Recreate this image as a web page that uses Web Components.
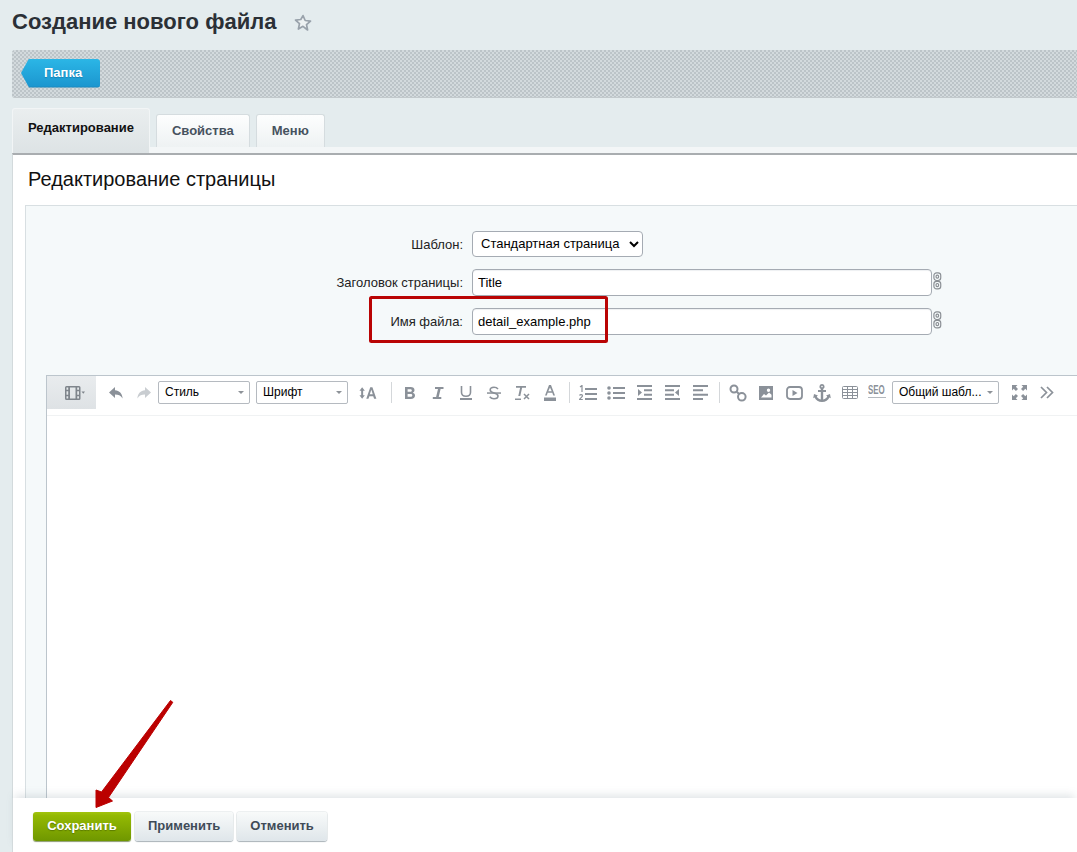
<!DOCTYPE html>
<html lang="ru">
<head>
<meta charset="utf-8">
<title>Создание нового файла</title>
<style>
  html, body { margin: 0; height: 100%; }
  body {
    width: 1077px; height: 852px; overflow: hidden; position: relative;
    background: #e4ecee; color: #000;
    font-family: "Liberation Sans", Arial, sans-serif; font-size: 13px;
    display: flex; flex-direction: column;
  }
</style>
</head>
<body>
<page-title>Создание нового файла</page-title>
<action-bar><back-button>Папка</back-button></action-bar>
<tab-strip>
  <tab-item active>Редактирование</tab-item>
  <tab-item>Свойства</tab-item>
  <tab-item>Меню</tab-item>
</tab-strip>
<content-panel heading="Редактирование страницы">
  <form-panel></form-panel>
  <html-editor></html-editor>
</content-panel>
<footer-bar>
  <foot-button kind="save">Сохранить</foot-button>
  <foot-button>Применить</foot-button>
  <foot-button>Отменить</foot-button>
</footer-bar>
<red-marks></red-marks>

<script>
function shadow(el, html) {
  el.attachShadow({ mode: "open" }).innerHTML = html;
}

class PageTitle extends HTMLElement {
  connectedCallback() {
    shadow(this, `
      <style>
        :host { display: flex; align-items: center; height: 50px; padding: 0 0 6px 12px; box-sizing: border-box; }
        h1 { margin: 0; font: bold 22px "Liberation Sans", Arial, sans-serif; color: #2b3036; }
        svg { margin-left: 18px; margin-top: 2px; }
      </style>
      <h1><slot></slot></h1>
      <svg width="18" height="18" viewBox="0 0 18 18"><path d="M9 1.6l2.2 4.9 5.3.6-4 3.6 1.1 5.3L9 12.3 4.4 15l1.1-5.3-4-3.6 5.3-.6z" fill="#eef2f3" stroke="#99a2ab" stroke-width="1.7" stroke-linejoin="round"/></svg>`);
  }
}

class ActionBar extends HTMLElement {
  connectedCallback() {
    shadow(this, `
      <style>
        :host {
          display: flex; align-items: center; box-sizing: border-box;
          height: 48px; margin-left: 12px; padding: 0 0 1px 9px;
          border-radius: 3px 0 0 3px;
          border-bottom: 1px solid #c2c9cc;
          background-color: #d3dadd;
          background-image: radial-gradient(circle at 1px 1px, #bcc4c8 0.9px, transparent 1.1px),
                            radial-gradient(circle at 3px 3px, #bcc4c8 0.9px, transparent 1.1px);
          background-size: 4px 4px;
        }
      </style>
      <slot></slot>`);
  }
}

class BackButton extends HTMLElement {
  connectedCallback() {
    shadow(this, `
      <style>
        :host {
          display: flex; align-items: center; box-sizing: border-box;
          width: 79px; height: 29px; padding: 0 0 2px 23px;
          color: #fff; font: bold 13px "Liberation Sans", Arial, sans-serif;
          text-shadow: 0 1px 1px #1480b4;
          background: linear-gradient(#2bb6e6, #1c97d0 93%, #1a80b2);
          clip-path: polygon(8px 0, 100% 0, 100% 100%, 8px 100%, 0 50%);
          border-radius: 0 3px 3px 0;
        }
      </style>
      <slot></slot>`);
  }
}

class TabStrip extends HTMLElement {
  connectedCallback() {
    shadow(this, `
      <style>
        :host {
          display: flex; align-items: flex-end; gap: 6px;
          height: 45px; margin: 10px 0 0 12px;
          position: relative;
        }
        .band { position: absolute; left: 138px; right: 0; bottom: 0; height: 6px; background: #f3f6f7; }
      </style>
      <div class="band"></div>
      <slot></slot>`);
  }
}

class TabItem extends HTMLElement {
  connectedCallback() {
    shadow(this, `
      <style>
        :host {
          display: flex; align-items: center; justify-content: center; box-sizing: border-box;
          position: relative;
          height: 33px; margin-bottom: 6px; padding: 0 15px 2px;
          font: bold 13px "Liberation Sans", Arial, sans-serif; color: #46525e;
          background: linear-gradient(#fdfefe, #eef2f3);
          border: 1px solid #d5dcdf; border-bottom: 0;
          border-radius: 3px 3px 0 0;
        }
        :host([active]) {
          height: 45px; margin-bottom: 0; padding: 0 15px 8px; color: #111;
          background: linear-gradient(#eaeeef, #dde3e5);
          border-color: #f2f5f6; border-bottom: 0;
        }
      </style>
      <slot></slot>`);
  }
}

class ContentPanel extends HTMLElement {
  connectedCallback() {
    shadow(this, `
      <style>
        :host {
          display: flex; flex-direction: column; flex: 1; min-height: 0; overflow: hidden;
          margin-left: 12px; background: #fff;
          border-top: 2px solid #a9adb0;
          border-left: 1px solid #d3dadc;
        }
        h2 { margin: 0; height: 50px; padding: 11px 0 0 15px; box-sizing: border-box;
             font: normal 20px/26px "Liberation Sans", Arial, sans-serif; color: #111; }
        .inner {
          flex: 1; display: flex; flex-direction: column; margin-left: 12px;
          background: #f5f9fa; border: 1px solid #d8dfe2; border-right: 0; border-bottom: 0;
        }
      </style>
      <h2>${this.getAttribute("heading")}</h2>
      <div class="inner"><slot></slot></div>`);
  }
}

const chain = `<svg width="9" height="18" viewBox="0 0 10 20" fill="none" stroke="#8a8f94" stroke-width="1.3"><rect x="1" y="1" width="7.6" height="8.4" rx="3"/><rect x="3.4" y="3.4" width="2.8" height="3.4" rx="1.2"/><rect x="1" y="10.4" width="7.6" height="8.4" rx="3"/><rect x="3.4" y="12.8" width="2.8" height="3.4" rx="1.2"/></svg>`;

class FormPanel extends HTMLElement {
  connectedCallback() {
    shadow(this, `
      <style>
        :host { display: grid; grid-template-columns: 437px 460px 1fr; column-gap: 9px; padding-top: 25px; align-items: center; height: 169px; box-sizing: border-box; align-content: start; font: 13px "Liberation Sans", Arial, sans-serif; }
        label { text-align: right; color: #222; }
        select, input {
          font: 13px "Liberation Sans", Arial, sans-serif; color: #000; box-sizing: border-box;
          background: #fff; border: 1px solid #a5abb3; border-radius: 4px; margin: 0; outline: 0;
        }
        select { width: 171px; height: 26px; padding: 0 0 1px 4px; }
        input { width: 460px; height: 27px; padding: 0 5px; box-shadow: inset 0 1px 1px #eef0f2; }
        .row { margin-bottom: 12px; }
        .link { display: flex; margin-left: -8px; margin-top: -3px; }
      </style>
      <label class="row">Шаблон:</label>
      <div class="row"><select><option>Стандартная страница</option></select></div>
      <div class="row"></div>
      <label class="row">Заголовок страницы:</label>
      <div class="row"><input value="Title"></div>
      <div class="row link">${chain}</div>
      <label class="row">Имя файла:</label>
      <div class="row"><input value="detail_example.php"></div>
      <div class="row link">${chain}</div>`);
  }
}

const G = "#8b9199";
const icons = {
  undo: `<svg width="16" height="14" viewBox="0 0 16 14"><path d="M7 1L1 6.5 7 12V8.4c3.4 0 5.600.9 7.600 4C14.200 7.400 11.400 4.600 7 4.300z" fill="${G}"/></svg>`,
  redo: `<svg width="16" height="14" viewBox="0 0 16 14"><path d="M9 1l6 5.500L9 12V8.400c-3.400 0-5.600.9-7.600 4C1.800 7.400 4.600 4.600 9 4.300z" fill="#c9cdd1"/></svg>`,
  size: `<svg width="18" height="14" viewBox="0 0 20 15"><path d="M3.500 1L6.500 5H4.600v5h1.900l-3 4-3-4h1.900V5H.5z" fill="${G}"/><path d="M12.500 1h2.400l4.400 13h-2.500l-1-3h-4.300l-1 3H8.100zm1.200 2.800L12 8.900h3.300z" fill="${G}"/></svg>`,
  bold: `<svg width="12" height="14" viewBox="0 0 12 14"><path fill-rule="evenodd" d="M1 1h5.600c2.500 0 3.900 1.200 3.900 3.100 0 1.300-.7 2.200-1.700 2.600 1.400.4 2.200 1.400 2.200 2.900 0 2.200-1.600 3.400-4.200 3.400H1zm2.600 2.200v2.600h2.600c1 0 1.600-.5 1.600-1.300s-.6-1.300-1.600-1.300zm0 4.700v2.900h2.900c1.100 0 1.800-.5 1.800-1.500s-.7-1.400-1.800-1.400z" fill="${G}"/></svg>`,
  italic: `<svg width="12" height="14" viewBox="0 0 12 14"><path d="M3 1h8.500v2H8.600L6.700 11h2.600v2H.8v-2h3.300l1.900-8H3z" fill="${G}"/></svg>`,
  under: `<svg width="12" height="15" viewBox="0 0 12 15"><path d="M1.500 1v6.200c0 2.600 1.700 4 4.500 4s4.500-1.400 4.500-4V1" fill="none" stroke="${G}" stroke-width="1.600"/><path d="M0 13h12v2H0z" fill="${G}"/></svg>`,
  strike: `<svg width="14" height="14" viewBox="0 0 14 14"><path d="M11 3C10 1.800 8.700 1.300 7 1.300 4.800 1.300 3.200 2.300 3.200 4c0 3.700 7.800 2.300 7.800 6 0 1.700-1.700 2.700-4 2.700-1.800 0-3.200-.6-4.300-1.900" fill="none" stroke="${G}" stroke-width="1.600"/><path d="M0 6.300h14v1.500H0z" fill="${G}"/></svg>`,
  clear: `<svg width="15" height="16" viewBox="0 0 15 16"><path d="M1 1h10v1.800H7.100L5.300 11H3.300l1.800-8.200H1zM0 13.500h6V15H0z" fill="${G}"/><path d="M9 9l5 5M14 9l-5 5" stroke="${G}" stroke-width="1.500"/></svg>`,
  color: `<svg width="12" height="16" viewBox="0 0 12 16"><path d="M5 0h2l4 10.500H9.200l-.9-2.700H3.700l-.9 2.700H1zm1 2.500L4.300 6.300h3.400z" fill="${G}"/><path d="M0 12.500h12V16H0z" fill="${G}"/></svg>`,
  ol: `<svg width="18" height="16" viewBox="0 0 18 16"><path d="M6 3h12v2H6zM6 8h12v2H6zM6 13h12v2H6z" fill="${G}"/><path d="M1 2l2-1.500V7M.5 10.500c.5-1.300 3-1.300 3 .3 0 1.200-2 2-3 3.700h3.300" fill="none" stroke="${G}" stroke-width="1.200"/></svg>`,
  ul: `<svg width="18" height="14" viewBox="0 0 18 14"><circle cx="2" cy="2" r="1.800" fill="${G}"/><circle cx="2" cy="7" r="1.800" fill="${G}"/><circle cx="2" cy="12" r="1.800" fill="${G}"/><path d="M6 1h12v2H6zM6 6h12v2H6zM6 11h12v2H6z" fill="${G}"/></svg>`,
  indent: `<svg width="15" height="15" viewBox="0 0 15 15"><path d="M0 0h15v2H0zM7 4.300h8v2H7zM7 8.700h8v2H7zM0 13h15v2H0zM1 4l4 3.500L1 11z" fill="${G}"/></svg>`,
  outdent: `<svg width="15" height="15" viewBox="0 0 15 15"><path d="M0 0h15v2H0zM0 4.300h9v2H0zM0 8.700h9v2H0zM0 13h15v2H0zM14 4l-4 3.500L14 11z" fill="${G}"/></svg>`,
  align: `<svg width="15" height="15" viewBox="0 0 15 15"><path d="M0 0h15v2H0zM0 4.300h10v2H0zM0 8.700h15v2H0zM0 13h10v2H0z" fill="${G}"/></svg>`,
  link: `<svg width="18" height="18" viewBox="0 0 18 18" fill="none" stroke="${G}" stroke-width="2"><circle cx="5" cy="5" r="3.500"/><circle cx="12.800" cy="12.800" r="3.800"/><path d="M7.800 7.800l2.200 2.200"/></svg>`,
  image: `<svg width="14" height="14" viewBox="0 0 14 14"><path fill-rule="evenodd" d="M0 0h14v14H0zM2 11.500h10.500V8.800L10 6.500 7 9.500 5 8zM9.500 2.500a1.700 1.700 0 100 3.400 1.700 1.700 0 000-3.400z" fill="${G}"/></svg>`,
  video: `<svg width="17" height="14" viewBox="0 0 17 14"><rect x="1" y="1" width="15" height="12" rx="3" fill="none" stroke="${G}" stroke-width="1.800"/><path d="M6.500 4l5 3-5 3z" fill="${G}"/></svg>`,
  anchor: `<svg width="18" height="18" viewBox="0 0 18 18"><path fill-rule="evenodd" d="M9 0a2.600 2.600 0 011.200 4.900V6H13v2h-2.800v7.400c2-.3 3.500-1.400 4-3.100L13 11.500l4-1.500.8 4.300-1.400-.9C15.400 16 12.500 18 9 18s-6.400-2-7.400-4.600l-1.400.9L1 10l4 1.500-1.200.8c.5 1.700 2 2.800 4 3.100V8H5V6h2.800V4.900A2.600 2.600 0 019 0zm0 1.800a.8.800 0 100 1.600.8.800 0 000-1.600z" fill="${G}"/></svg>`,
  table: `<svg width="16" height="13" viewBox="0 0 16 13" fill="none" stroke="${G}"><rect x=".5" y=".5" width="15" height="12" rx="1"/><path d="M.5 3.500h15M.5 6.500h15M.5 9.500h15M5.500 .5v12M10.500 .5v12"/></svg>`,
  full: `<svg width="15" height="15" viewBox="0 0 15 15"><path d="M0 0h5.500L3.800 1.700 6 3.900 3.900 6 1.700 3.800 0 5.500zM15 0v5.500l-1.700-1.700L11.100 6 9 3.900l2.200-2.200L9.500 0zM0 15V9.500l1.700 1.700L3.900 9 6 11.100l-2.200 2.200L5.500 15zM15 15H9.500l1.700-1.700L9 11.100 11.100 9l2.200 2.200L15 9.500z" fill="${G}"/></svg>`,
  more: `<svg width="14" height="13" viewBox="0 0 14 13" fill="none" stroke="${G}" stroke-width="1.700"><path d="M1 1l5.500 5.500L1 12M7 1l5.500 5.500L7 12"/></svg>`,
  film: `<svg width="20" height="14" viewBox="0 0 20 14"><path fill-rule="evenodd" d="M1.500 0H14a1.500 1.500 0 011.500 1.500v11A1.500 1.500 0 0114 14H1.500A1.500 1.500 0 010 12.500v-11A1.500 1.500 0 011.500 0zM1.500 1.500v2.300h1.700V1.500zm0 3.700v3.600h1.700V5.200zm0 5v2.300h1.700v-2.300zM5 1.500v11h5.500v-11zm7.200 0v2.300H14V1.500zm0 3.700v3.600H14V5.200zm0 5v2.300H14v-2.300z" fill="#7f858c"/><path d="M16.500 5.500H20l-1.700 2.200z" fill="#7f858c"/></svg>`
};

class ToolIcon extends HTMLElement {
  connectedCallback() {
    shadow(this, `
      <style>:host { display: flex; align-items: center; justify-content: center; flex: none; width: 28px; height: 23px; }</style>
      ${icons[this.getAttribute("name")]}`);
  }
}

class ToolSep extends HTMLElement {
  connectedCallback() {
    shadow(this, `
      <style>
        :host { display: block; flex: none; height: 24px; box-sizing: border-box; width: ${this.getAttribute("w")}px; padding-left: ${this.getAttribute("x")}px; }
        i { display: block; width: 1px; height: 21px; margin-top: 1px; background: #d4d7da; }
      </style><i></i>`);
  }
}

class ToolSelect extends HTMLElement {
  connectedCallback() {
    shadow(this, `
      <style>
        :host {
          display: flex; align-items: center; flex: none; box-sizing: border-box; height: 23px;
          width: ${this.getAttribute("w")}px; padding: 0 6px 1px;
          background: #fff; border: 1px solid #b5bac0; border-radius: 2px;
          font: 12px "Liberation Sans", Arial, sans-serif; color: #000;
        }
        span { flex: 1; white-space: nowrap; }
        i { width: 0; height: 0; border: 3.500px solid transparent; border-top: 3.500px solid #8d9298; border-bottom: 0; margin-right: -1px; }
      </style><span><slot></slot></span><i></i>`);
  }
}

class HtmlEditor extends HTMLElement {
  connectedCallback() {
    const tool = n => `<tool-icon name="${n}"></tool-icon>`;
    shadow(this, `
      <style>
        :host {
          display: flex; flex-direction: column; flex: 1; margin-left: 20px;
          background: #fff; border: 1px solid #bcc5cc; border-right: 0; border-bottom: 0;
        }
        .bar { display: flex; height: 40px; box-sizing: border-box; border-bottom: 1px solid #f0f2f3; }
        .film { flex: none; display: flex; align-items: center; box-sizing: border-box; padding-left: 18px; width: 49px; height: 33px; background: linear-gradient(#e9ecee, #dee2e5); }
        .tools { display: flex; align-items: flex-start; padding: 5px 0 0 6px; }
        .seo { flex: none; box-sizing: border-box; width: 28px; height: 23px; padding: 1px 6px 0 4px; color: #8b9199; }
        .seo span { display: block; height: 15px; border-bottom: 1px solid #b4b9be; white-space: nowrap; }
        .seo b { display: inline-block; font: bold 12px/12px "Liberation Sans", Arial, sans-serif; transform: scaleX(.66); transform-origin: left top; }
        .gap { flex: none; width: 6px; }
      </style>
      <div class="bar">
        <div class="film">${icons.film}</div>
        <div class="tools">
          ${tool("undo")}${tool("redo")}
          <tool-select w="92">Стиль</tool-select><div class="gap"></div>
          <tool-select w="92">Шрифт</tool-select><div class="gap"></div>
          ${tool("size")}<tool-sep w="14" x="9"></tool-sep>
          ${tool("bold")}${tool("italic")}${tool("under")}${tool("strike")}${tool("clear")}${tool("color")}
          <tool-sep w="10" x="5"></tool-sep>
          ${tool("ol")}${tool("ul")}${tool("indent")}${tool("outdent")}${tool("align")}
          <tool-sep w="10" x="5"></tool-sep>
          ${tool("link")}${tool("image")}${tool("video")}${tool("anchor")}${tool("table")}
          <div class="seo"><span><b>SEO</b></span></div>
          <tool-select w="107">Общий шабл...</tool-select><div class="gap"></div>
          ${tool("full")}${tool("more")}
        </div>
      </div>`);
  }
}

class FooterBar extends HTMLElement {
  connectedCallback() {
    shadow(this, `
      <style>
        :host {
          display: flex; align-items: flex-start; gap: 4px; flex: none; box-sizing: border-box;
          height: 54px; margin-left: 12px; padding: 14px 0 0 20px;
          background: #fff; border-left: 1px solid #d3dadc;
          box-shadow: 0 -6px 8px -3px rgba(120,135,145,.22);
          position: relative;
        }
      </style><slot></slot>`);
  }
}

class FootButton extends HTMLElement {
  connectedCallback() {
    shadow(this, `
      <style>
        :host {
          display: flex; align-items: center; justify-content: center; box-sizing: border-box;
          height: 29px; padding: 0 13px 2px;
          font: bold 13px "Liberation Sans", Arial, sans-serif; color: #3f4b58;
          background: linear-gradient(#f8fafa, #dfe6ea);
          border-radius: 3px; box-shadow: 0 1px 1px #aab3b9, 0 0 0 1px #edf0f1;
        }
        :host([kind="save"]) {
          width: 98px; padding: 0 0 2px; color: #fff; text-shadow: 0 1px 1px #5b7a00;
          background: linear-gradient(#a3c40e, #94b903 12%, #6f9700);
          box-shadow: 0 1px 1px #8b9b70;
        }
      </style><slot></slot>`);
  }
}

// red rectangle and arrow drawn over the screenshot
class RedMarks extends HTMLElement {
  connectedCallback() {
    shadow(this, `
      <style>:host { position: absolute; left: 0; top: 0; width: 1077px; height: 852px; pointer-events: none; }</style>
      <svg width="1077" height="852" viewBox="0 0 1077 852" fill="none">
        <rect x="370.500" y="297.500" width="236" height="44" rx="1" stroke="#b90404" stroke-width="3"/>
        <path d="M170.500 700.500L172.800 702.300 108.500 797.500 112.500 801 96 807.500 96 790 101.500 792z" fill="#bb0000" stroke="#bb0000" stroke-width="1" stroke-linejoin="round"/>
      </svg>`);
  }
}

customElements.define("page-title", PageTitle);
customElements.define("action-bar", ActionBar);
customElements.define("back-button", BackButton);
customElements.define("tab-strip", TabStrip);
customElements.define("tab-item", TabItem);
customElements.define("content-panel", ContentPanel);
customElements.define("form-panel", FormPanel);
customElements.define("tool-icon", ToolIcon);
customElements.define("tool-sep", ToolSep);
customElements.define("tool-select", ToolSelect);
customElements.define("html-editor", HtmlEditor);
customElements.define("footer-bar", FooterBar);
customElements.define("foot-button", FootButton);
customElements.define("red-marks", RedMarks);
</script>
</body>
</html>
